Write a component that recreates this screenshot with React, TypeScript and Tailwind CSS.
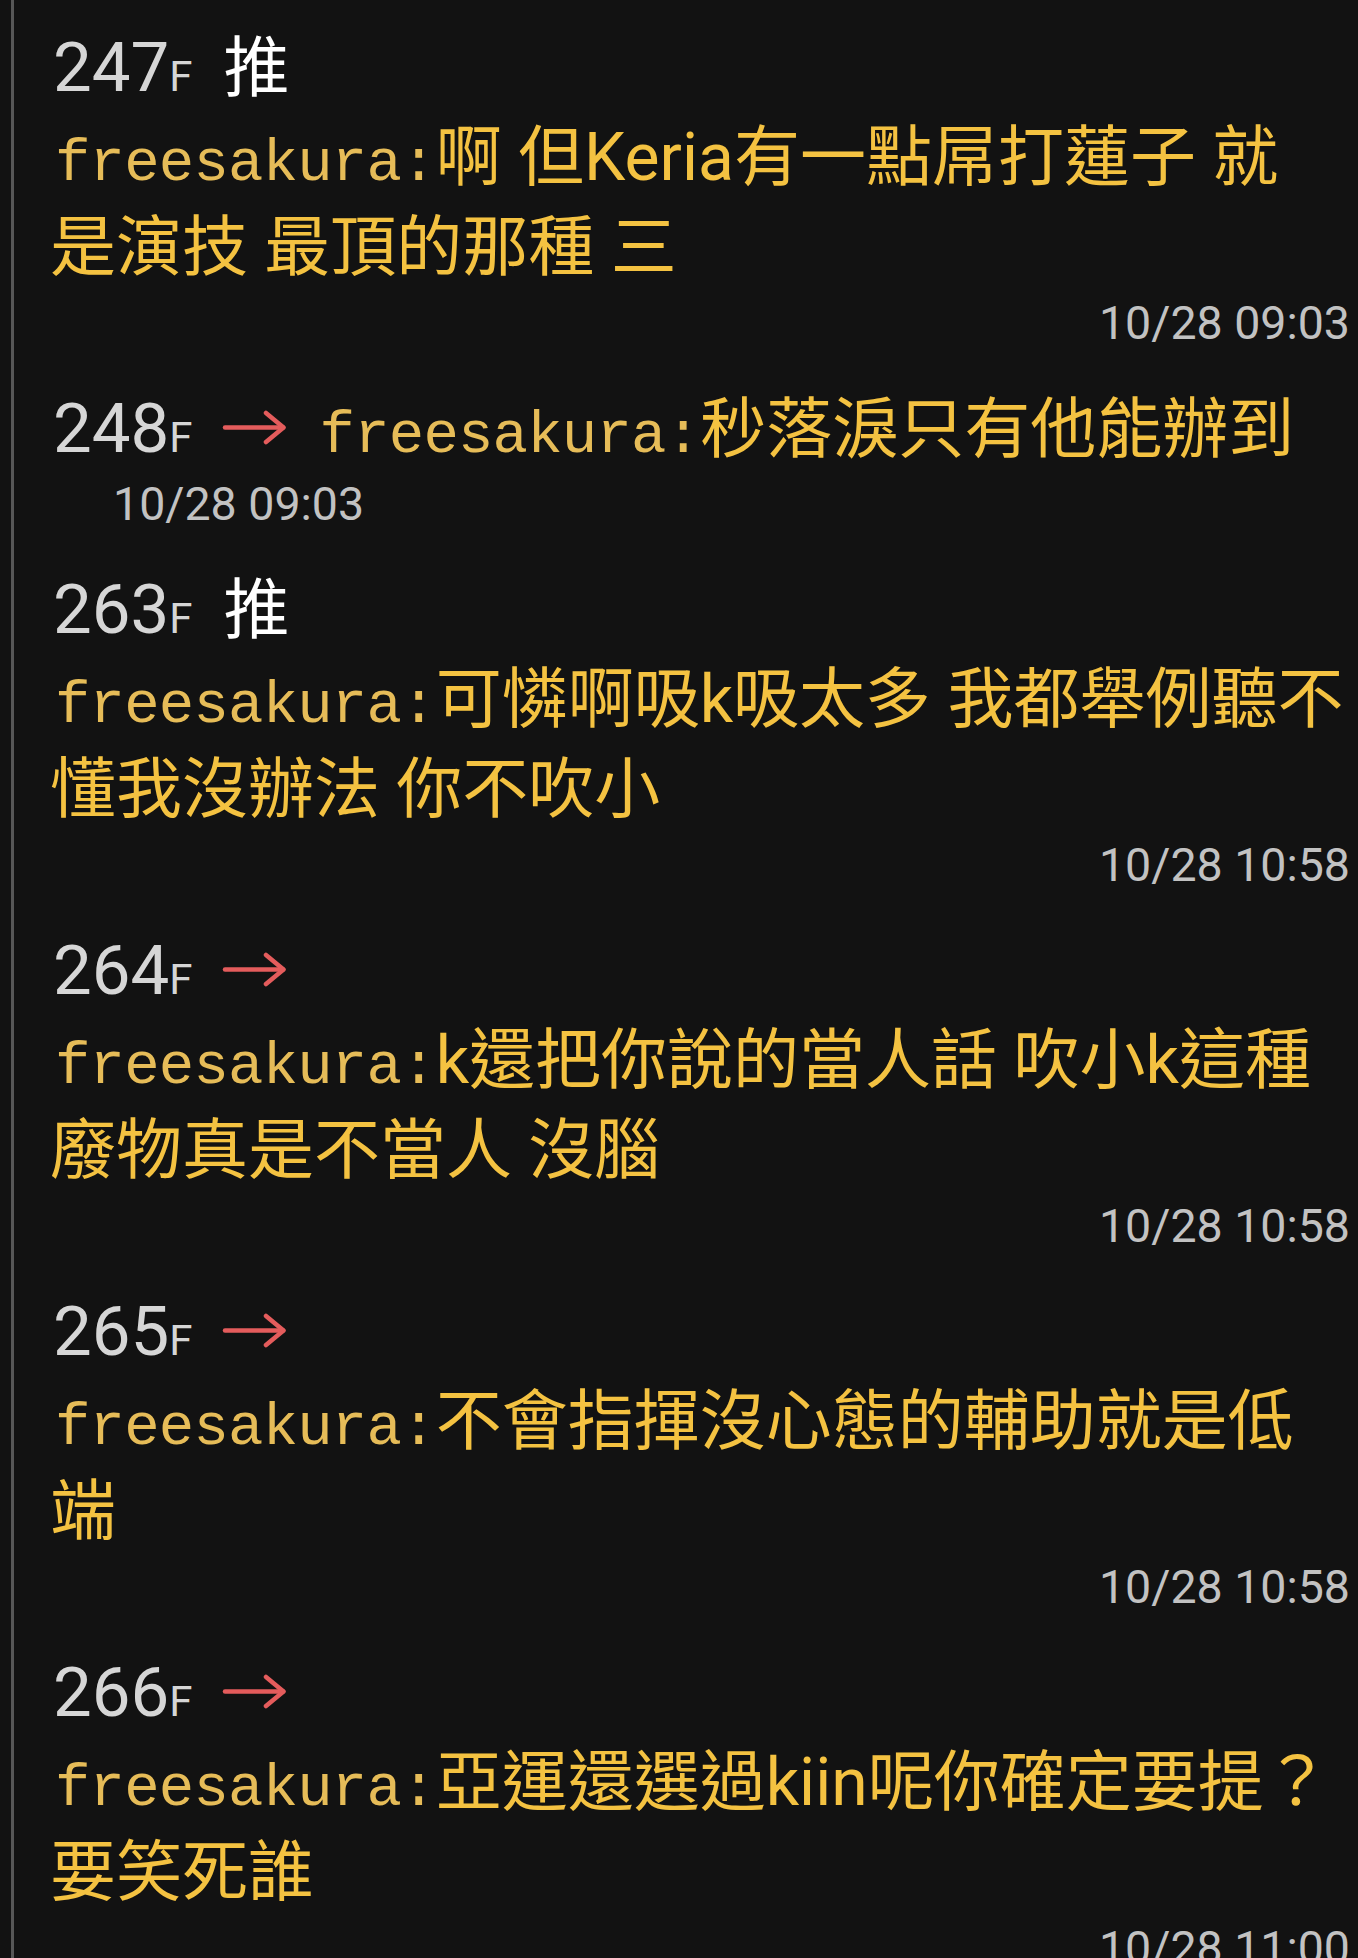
import React from "react";

type Comment = {
  floor: string;
  tag: "push" | "arrow";
  inline?: string;
  lines?: string[];
  time: string;
};

const comments: Comment[] = [
  {
    floor: "247",
    tag: "push",
    lines: ["啊 但Keria有一點屌打蓮子 就", "是演技 最頂的那種 三"],
    time: "10/28 09:03",
  },
  {
    floor: "248",
    tag: "arrow",
    inline: "秒落淚只有他能辦到",
    time: "10/28 09:03",
  },
  {
    floor: "263",
    tag: "push",
    lines: ["可憐啊吸k吸太多 我都舉例聽不", "懂我沒辦法 你不吹小"],
    time: "10/28 10:58",
  },
  {
    floor: "264",
    tag: "arrow",
    lines: ["k還把你說的當人話 吹小k這種", "廢物真是不當人 沒腦"],
    time: "10/28 10:58",
  },
  {
    floor: "265",
    tag: "arrow",
    lines: ["不會指揮沒心態的輔助就是低", "端"],
    time: "10/28 10:58",
  },
  {
    floor: "266",
    tag: "arrow",
    lines: ["亞運還選過kiin呢你確定要提？", "要笑死誰"],
    time: "10/28 11:00",
  },
];

function Arrow() {
  return (
    <svg
      width="64"
      height="60"
      viewBox="0 0 64 60"
      className="inline-block align-baseline ml-[29px]"
      fill="none"
      stroke="#e45c5c"
      strokeWidth="4.5"
      strokeLinecap="round"
      strokeLinejoin="round"
    >
      <path d="M3 35.5 H61" />
      <path d="M44 21 L61.5 35.5 L44 50" />
    </svg>
  );
}

function User() {
  return (
    <span className="ml-[5px] font-['Liberation_Mono',monospace] text-[59px] leading-none text-[#e6bc58] tracking-[-0.8px]">
      freesakura:
    </span>
  );
}

function Header({ c }: { c: Comment }) {
  return (
    <div className="h-[90px] leading-[90px] whitespace-nowrap">
      <span className="ml-[3px] text-[69px] text-[#d6d6d6]">{c.floor}</span>
      <span className="text-[42px] text-[#d6d6d6]">F</span>
      {c.tag === "push" ? (
        <span className="ml-[31px] text-white">推</span>
      ) : (
        <Arrow />
      )}
      {c.inline && (
        <>
          <span className="ml-[29px]">
            <User />
          </span>
          <span className="text-[#f4c241]">{c.inline}</span>
        </>
      )}
    </div>
  );
}

function Block({ c }: { c: Comment }) {
  return (
    <div className="mb-[31px]">
      <Header c={c} />
      {c.lines?.map((line, i) => (
        <div key={i} className="h-[90px] leading-[90px] whitespace-nowrap">
          {i === 0 && <User />}
          <span className="text-[#f4c241]">{line}</span>
        </div>
      ))}
      <div
        className={
          c.inline
            ? "h-[60px] leading-[60px] text-[46.5px] text-[#c2c2c2] pl-[63px]"
            : "h-[60px] leading-[60px] text-[46.5px] text-[#c2c2c2] text-right"
        }
      >
        {c.time}
      </div>
    </div>
  );
}

export default function App() {
  return (
    <div className="w-[1358px] h-[1958px] overflow-hidden bg-[#121212] font-['Roboto','Noto_Sans_CJK_TC',sans-serif]">
      <div className="ml-[11px] h-full border-l-[3px] border-[#575757] pl-[36px] pr-[8px] pt-[23px] text-[66px]">
        {comments.map((c) => (
          <Block key={c.floor} c={c} />
        ))}
      </div>
    </div>
  );
}
